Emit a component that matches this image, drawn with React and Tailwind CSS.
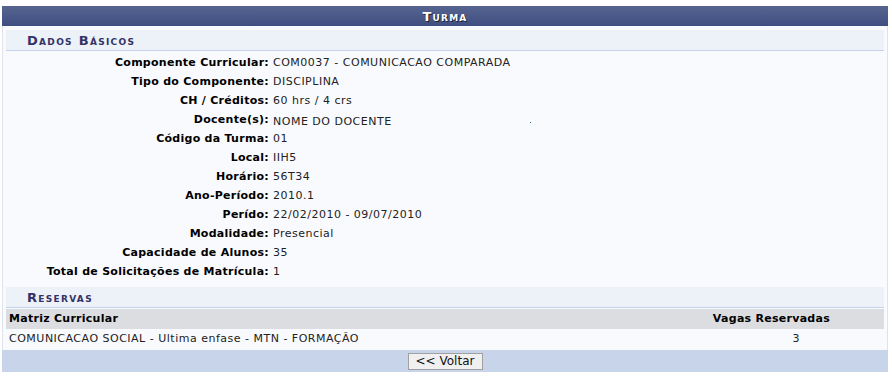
import React from "react"

const dados = [
    ["Componente Curricular:", "COM0037 - COMUNICACAO COMPARADA"],
    ["Tipo do Componente:", "DISCIPLINA"],
    ["CH / Créditos:", "60 hrs / 4 crs"],
    ["Docente(s):", "NOME DO DOCENTE"],
    ["Código da Turma:", "01"],
    ["Local:", "IIH5"],
    ["Horário:", "56T34"],
    ["Ano-Período:", "2010.1"],
    ["Perído:", "22/02/2010 - 09/07/2010"],
    ["Modalidade:", "Presencial"],
    ["Capacidade de Alunos:", "35"],
    ["Total de Solicitações de Matrícula:", "1"],
]

const SubHeader = ({ children }) => (
    <div className="h-[21px] bg-[#edf1f8] border-b border-[#c4d2eb] pl-[21px] flex items-center pt-[1px] text-[13px] font-bold text-[#333366] tracking-[1.3px] [font-variant:small-caps]">
        {children}
    </div>
)

const App = () => {
    return (
        <div
            className="w-[892px] h-[378px] bg-white pt-[6px] px-[2px] text-[11px] text-[#222] tracking-[0.5px]"
            style={{ fontFamily: '"DejaVu Sans", Verdana, sans-serif' }}
        >
            <div className="w-[886px]">
                <div className="h-[20px] bg-gradient-to-b from-[#56648f] to-[#3f4e82] flex items-center justify-center pt-[1px] text-white font-bold text-[13px] tracking-[1.2px] [font-variant:small-caps] [text-shadow:1px_1px_0_#222]">
                    Turma
                </div>
                <div className="border-x border-[#dfe3ec] bg-[#f9fafd] px-[3px] pt-[4px]">
                    <SubHeader>Dados Básicos</SubHeader>
                    <div className="pt-[3px] pb-[5px]">
                        {dados.map(([label, value]) => (
                            <div key={label} className="flex h-[19px] items-center">
                                <div className="w-[263px] text-right font-bold text-black tracking-[0.27px]">{label}</div>
                                <div className={label === "Docente(s):" ? "pl-[4px] pt-[3px] flex items-center" : "pl-[4px]"}>
                                    {value}
                                    {label === "Docente(s):" && (
                                        <span className="ml-[138px] inline-block w-[1px] h-[1px] bg-[#3a6ea5]"></span>
                                    )}
                                </div>
                            </div>
                        ))}
                    </div>
                    <SubHeader>Reservas</SubHeader>
                    <div className="mt-[1px] h-[20px] bg-[#dcdde1] flex items-center pt-[1px] font-bold text-black tracking-[0.27px]">
                        <div className="flex-1 pl-[3px]">Matriz Curricular</div>
                        <div className="pr-[54px] text-right">Vagas Reservadas</div>
                    </div>
                    <div className="h-[21px] flex items-center">
                        <div className="flex-1 pl-[3px]">COMUNICACAO SOCIAL - Ultima enfase - MTN - FORMAÇÃO</div>
                        <div className="pr-[84px] text-right">3</div>
                    </div>
                </div>
                <div className="h-[22px] bg-[#c8d4ea] flex items-center justify-center">
                    <button className="w-[75px] h-[17px] border border-[#a0a0a0] bg-[#f0f0f0] text-[12px] text-[#111] leading-none tracking-normal">
                        &lt;&lt; Voltar
                    </button>
                </div>
            </div>
        </div>
    )
}

export default App
